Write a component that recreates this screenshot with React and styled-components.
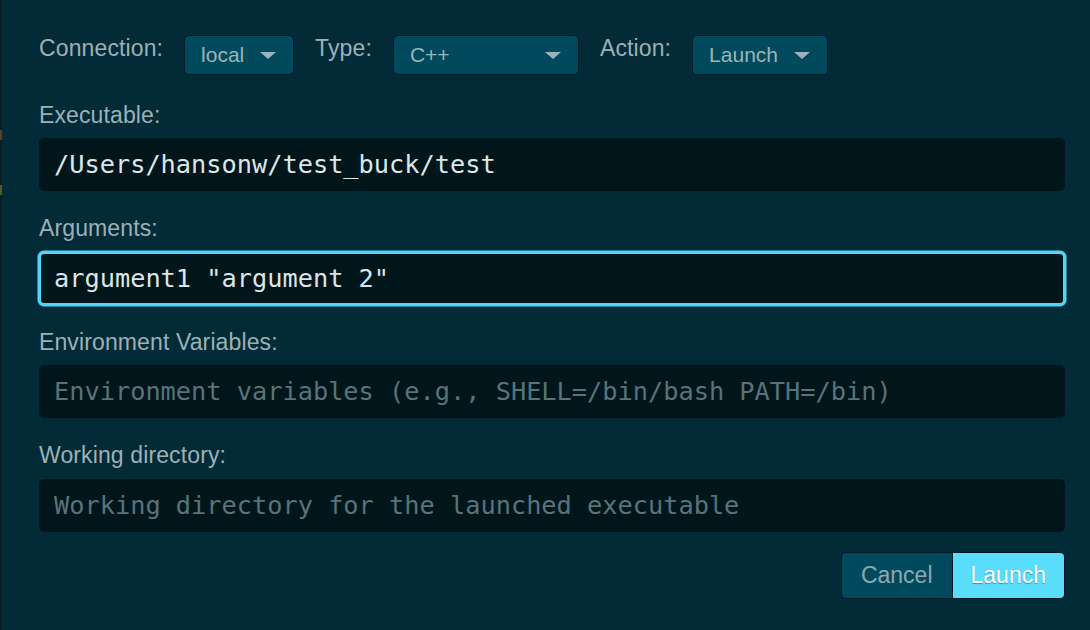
import React from 'react'
import styled, { createGlobalStyle } from 'styled-components'

const GlobalStyle = createGlobalStyle`
  html, body {
    margin: 0;
    padding: 0;
    background: #022a37;
  }
  body {
    font-family: 'Liberation Sans', Arial, sans-serif;
  }
`

const Screen = styled.div`
  display: flex;
  width: 1090px;
  height: 630px;
  overflow: hidden;
  background: #022a37;
`

const EditorPeek = styled.div`
  width: 2px;
  flex: none;
  background: linear-gradient(
    to bottom,
    #0b1d24 0px, #0b1d24 130px,
    #6b3a1c 130px, #6b3a1c 140px,
    #0b1d24 140px, #0b1d24 185px,
    #5a5a1a 185px, #5a5a1a 195px,
    #0b1d24 195px
  );
`

const Dialog = styled.div`
  flex: 1;
  padding: 35px 25px 0 37px;
  display: flex;
  flex-direction: column;
`

const TopRow = styled.div`
  display: flex;
  align-items: flex-start;
  gap: 21px;
  height: 40px;
  margin-bottom: 26.5px;
`

const Label = styled.div`
  font-size: 23px;
  line-height: 26px;
  letter-spacing: 0.12px;
  color: #9cb1b6;
  white-space: nowrap;
`

const SelectBox = styled.div`
  box-sizing: border-box;
  width: ${p => p.$width}px;
  height: 40px;
  display: flex;
  align-items: center;
  justify-content: space-between;
  padding: 0 17px 0 16px;
  background: #014a5e;
  border: 1px solid #011c27;
  border-radius: 5px;
  font-size: 21px;
  color: #9cb4b9;
`

const Caret = styled.svg`
  width: 16px;
  height: 7px;
  flex: none;
  margin-top: 1px;
`

const Fields = styled.div`
  display: flex;
  flex-direction: column;
  gap: 24px;
`

const Field = styled.div`
  display: flex;
  flex-direction: column;
  > ${Label} { margin-bottom: 10.5px; }
`

const Input = styled.div`
  box-sizing: border-box;
  height: 53px;
  display: flex;
  align-items: center;
  padding: 0 13px;
  background: #01161b;
  border: 2px solid ${p => (p.$focused ? '#52d6f5' : '#01161b')};
  box-shadow: ${p => (p.$focused ? '0 0 0 1.5px #52d6f5' : 'none')};
  border-radius: 5px;
  font-family: 'DejaVu Sans Mono', 'Liberation Mono', monospace;
  font-size: 25.3px;
  color: ${p => (p.$placeholder ? '#58737a' : '#dce6e8')};
  white-space: nowrap;
  overflow: hidden;
`

const Footer = styled.div`
  display: flex;
  justify-content: flex-end;
  margin-top: 20px;
`

const ButtonGroup = styled.div`
  display: flex;
  border: 1px solid #011a24;
  border-radius: 5px;
  overflow: hidden;
  background: #011a24;
  gap: 1px;
`

const Button = styled.div`
  height: 45px;
  display: flex;
  align-items: center;
  padding: 0 ${p => (p.$primary ? 18 : 19)}px;
  font-size: 23px;
  background: ${p => (p.$primary ? '#5adcfb' : '#014a5e')};
  color: ${p => (p.$primary ? '#ffffff' : '#8ea7ad')};
  text-shadow: ${p => (p.$primary ? '0 1px 1px rgba(0, 40, 60, 0.4)' : 'none')};
`

function Select ({ value, width }) {
  return (
    <SelectBox $width={width}>
      <span>{value}</span>
      <Caret viewBox='0 0 16 7'>
        <path d='M0 0 L16 0 L8 7 Z' fill='#9cb4b9'/>
      </Caret>
    </SelectBox>
  )
}

const fields = [
  { label: 'Executable:', value: '/Users/hansonw/test_buck/test' },
  { label: 'Arguments:', value: 'argument1 "argument 2"', focused: true },
  { label: 'Environment Variables:', placeholder: 'Environment variables (e.g., SHELL=/bin/bash PATH=/bin)' },
  { label: 'Working directory:', placeholder: 'Working directory for the launched executable' }
]

export default function App () {
  return (
    <Screen>
      <GlobalStyle/>
      <EditorPeek/>
      <Dialog>
        <TopRow>
          <Label>Connection:</Label>
          <Select value='local' width={110}/>
          <Label>Type:</Label>
          <Select value='C++' width={186}/>
          <Label>Action:</Label>
          <Select value='Launch' width={136}/>
        </TopRow>
        <Fields>
          {fields.map(f => (
            <Field key={f.label}>
              <Label>{f.label}</Label>
              <Input $focused={f.focused} $placeholder={!f.value}>
                {f.value || f.placeholder}
              </Input>
            </Field>
          ))}
        </Fields>
        <Footer>
          <ButtonGroup>
            <Button>Cancel</Button>
            <Button $primary>Launch</Button>
          </ButtonGroup>
        </Footer>
      </Dialog>
    </Screen>
  )
}
